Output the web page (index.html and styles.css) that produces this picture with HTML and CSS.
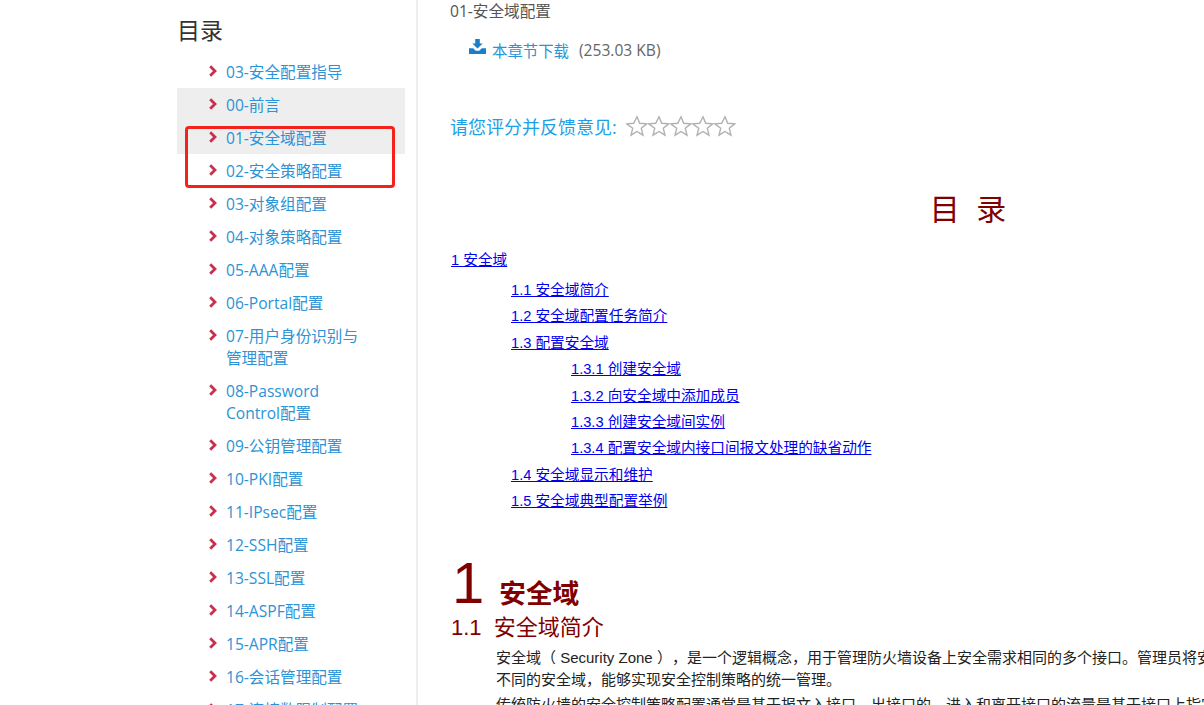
FILE: index.html
```html
<!DOCTYPE html>
<html lang="zh">
<head>
<meta charset="utf-8">
<title>01-安全域配置</title>
<link rel="stylesheet" href="styles.css">
</head>
<body>
<div class="page">
  <aside class="sidebar">
    <h2 class="side-title">目录</h2>
    <ul class="tree">
      <li class="item"><svg class="chev" viewBox="0 0 8 12"><path d="M1.2 1.2 6 6l-4.8 4.8"/></svg><a>03-安全配置指导</a></li>
      <li class="item on"><svg class="chev" viewBox="0 0 8 12"><path d="M1.2 1.2 6 6l-4.8 4.8"/></svg><a>00-前言</a></li>
      <li class="item on"><svg class="chev" viewBox="0 0 8 12"><path d="M1.2 1.2 6 6l-4.8 4.8"/></svg><a>01-安全域配置</a></li>
      <li class="item"><svg class="chev" viewBox="0 0 8 12"><path d="M1.2 1.2 6 6l-4.8 4.8"/></svg><a>02-安全策略配置</a></li>
      <li class="item"><svg class="chev" viewBox="0 0 8 12"><path d="M1.2 1.2 6 6l-4.8 4.8"/></svg><a>03-对象组配置</a></li>
      <li class="item"><svg class="chev" viewBox="0 0 8 12"><path d="M1.2 1.2 6 6l-4.8 4.8"/></svg><a>04-对象策略配置</a></li>
      <li class="item"><svg class="chev" viewBox="0 0 8 12"><path d="M1.2 1.2 6 6l-4.8 4.8"/></svg><a>05-AAA配置</a></li>
      <li class="item"><svg class="chev" viewBox="0 0 8 12"><path d="M1.2 1.2 6 6l-4.8 4.8"/></svg><a>06-Portal配置</a></li>
      <li class="item"><svg class="chev" viewBox="0 0 8 12"><path d="M1.2 1.2 6 6l-4.8 4.8"/></svg><a>07-用户身份识别与<br>管理配置</a></li>
      <li class="item"><svg class="chev" viewBox="0 0 8 12"><path d="M1.2 1.2 6 6l-4.8 4.8"/></svg><a>08-Password<br>Control配置</a></li>
      <li class="item"><svg class="chev" viewBox="0 0 8 12"><path d="M1.2 1.2 6 6l-4.8 4.8"/></svg><a>09-公钥管理配置</a></li>
      <li class="item"><svg class="chev" viewBox="0 0 8 12"><path d="M1.2 1.2 6 6l-4.8 4.8"/></svg><a>10-PKI配置</a></li>
      <li class="item"><svg class="chev" viewBox="0 0 8 12"><path d="M1.2 1.2 6 6l-4.8 4.8"/></svg><a>11-IPsec配置</a></li>
      <li class="item"><svg class="chev" viewBox="0 0 8 12"><path d="M1.2 1.2 6 6l-4.8 4.8"/></svg><a>12-SSH配置</a></li>
      <li class="item"><svg class="chev" viewBox="0 0 8 12"><path d="M1.2 1.2 6 6l-4.8 4.8"/></svg><a>13-SSL配置</a></li>
      <li class="item"><svg class="chev" viewBox="0 0 8 12"><path d="M1.2 1.2 6 6l-4.8 4.8"/></svg><a>14-ASPF配置</a></li>
      <li class="item"><svg class="chev" viewBox="0 0 8 12"><path d="M1.2 1.2 6 6l-4.8 4.8"/></svg><a>15-APR配置</a></li>
      <li class="item"><svg class="chev" viewBox="0 0 8 12"><path d="M1.2 1.2 6 6l-4.8 4.8"/></svg><a>16-会话管理配置</a></li>
      <li class="item"><svg class="chev" viewBox="0 0 8 12"><path d="M1.2 1.2 6 6l-4.8 4.8"/></svg><a>17-连接数限制配置</a></li>
    </ul>
    <div class="callout"></div>
  </aside>
  <main class="main">
    <div class="crumb">01-安全域配置</div>
    <div class="download">
      <svg class="dl-icon" viewBox="0 0 17 15"><path d="M6.2 0h4.6v4.6h2.9L8.5 9.6 3.3 4.6h2.9z"/><path d="M0 9.2h4.2l2.6 2.5h3.4l2.6-2.5H17V15H0z"/></svg>
      <a class="dl-link">本章节下载</a><span class="dl-size">(253.03 KB)</span>
    </div>
    <div class="rate">
      <span class="rate-label">请您评分并反馈意见:</span>
      <span class="stars">
        <svg class="star" viewBox="0 0 22 22"><path d="M11 1.8l2.7 6.5 7 .5-5.4 4.5 1.7 6.9-6-3.7-6 3.7 1.7-6.9L.7 8.8l7-.5z"/></svg>
        <svg class="star" viewBox="0 0 22 22"><path d="M11 1.8l2.7 6.5 7 .5-5.4 4.5 1.7 6.9-6-3.7-6 3.7 1.7-6.9L.7 8.8l7-.5z"/></svg>
        <svg class="star" viewBox="0 0 22 22"><path d="M11 1.8l2.7 6.5 7 .5-5.4 4.5 1.7 6.9-6-3.7-6 3.7 1.7-6.9L.7 8.8l7-.5z"/></svg>
        <svg class="star" viewBox="0 0 22 22"><path d="M11 1.8l2.7 6.5 7 .5-5.4 4.5 1.7 6.9-6-3.7-6 3.7 1.7-6.9L.7 8.8l7-.5z"/></svg>
        <svg class="star" viewBox="0 0 22 22"><path d="M11 1.8l2.7 6.5 7 .5-5.4 4.5 1.7 6.9-6-3.7-6 3.7 1.7-6.9L.7 8.8l7-.5z"/></svg>
      </span>
    </div>
    <article class="doc">
      <h1 class="doc-toc-title">目&nbsp;&nbsp;录</h1>
      <p class="toc l1"><a href="#">1 安全域</a></p>
      <p class="toc l2"><a href="#">1.1 安全域简介</a></p>
      <p class="toc l2"><a href="#">1.2 安全域配置任务简介</a></p>
      <p class="toc l2"><a href="#">1.3 配置安全域</a></p>
      <p class="toc l3"><a href="#">1.3.1 创建安全域</a></p>
      <p class="toc l3"><a href="#">1.3.2 向安全域中添加成员</a></p>
      <p class="toc l3"><a href="#">1.3.3 创建安全域间实例</a></p>
      <p class="toc l3"><a href="#">1.3.4 配置安全域内接口间报文处理的缺省动作</a></p>
      <p class="toc l2"><a href="#">1.4 安全域显示和维护</a></p>
      <p class="toc l2"><a href="#">1.5 安全域典型配置举例</a></p>
      <h2 class="h1"><span class="h1-num">1</span><span class="h1-text">安全域</span></h2>
      <h3 class="h2">1.1&nbsp; 安全域简介</h3>
      <p class="body">安全域（ Security Zone ），是一个逻辑概念，用于管理防火墙设备上安全需求相同的多个接口。管理员将安全需求相同的接口进行分组，并加入</p>
      <p class="body">不同的安全域，能够实现安全控制策略的统一管理。</p>
      <p class="body next">传统防火墙的安全控制策略配置通常是基于报文入接口、出接口的，进入和离开接口的流量是基于接口上指定的方向来进行匹配</p>
    </article>
  </main>
</div>
</body>
</html>
```
FILE: styles.css
```css
* { box-sizing: border-box; }
html, body { margin: 0; height: 705px; overflow: hidden; background: #fff; }
body { font-family: "Open Sans", "Noto Sans CJK SC", sans-serif; color: #333; }
.page { display: flex; height: 705px; overflow: hidden; }

.sidebar {
  position: relative;
  flex: 0 0 418px;
  height: 705px;
  overflow: hidden;
  padding: 15px 11px 0 177px;
  border-right: 2px solid #eee;
}
.side-title { margin: 0 0 10px; font-size: 23px; font-weight: 400; line-height: 30px; color: #333; }
.tree { list-style: none; margin: 0; padding: 0; }
.item {
  position: relative;
  padding: 5.5px 0 5.5px 49px;
  font-size: 15.6px;
  line-height: 22px;
  color: #2b93d6;
}
.item.on { background: #eee; }
.chev {
  position: absolute;
  left: 32px;
  top: 10px;
  width: 8px;
  height: 12px;
  fill: none;
  stroke: #c9304f;
  stroke-width: 2.8;
}
.callout {
  position: absolute;
  left: 185px;
  top: 126px;
  width: 210px;
  height: 62px;
  border: 3px solid #f5221b;
  border-radius: 4px;
}

.main { flex: 1 1 auto; min-width: 0; padding: 0 0 0 32px; overflow: hidden; }
.crumb { font-size: 15.6px; line-height: 22px; color: #555; }
.download { display: flex; align-items: center; margin: 17px 0 0 19px; height: 22px; font-size: 15.6px; }
.dl-icon { width: 17px; height: 15px; fill: #1a7fc9; margin: -8px 6px 0 0; }
.dl-link { color: #2b93d6; font-size: 15.4px; }
.dl-size { margin-left: 10px; color: #666; }
.rate { display: flex; align-items: center; margin-top: 53px; height: 24px; }
.rate-label { font-size: 18px; color: #1ea0e6; }
.stars { display: flex; margin-left: 9px; }
.star { width: 22px; height: 22px; fill: #fff; stroke: #b0b0b0; stroke-width: 1.4; }

.doc { width: 1036px; font-family: "Liberation Sans", "Noto Sans CJK SC", sans-serif; text-spacing-trim: space-all; }
.doc-toc-title { margin: 51px 0 16px; text-align: center; font-size: 30px; font-weight: 400; line-height: 42px; color: #800000; }
.toc { margin: 0 0 0 1px; font-size: 14.67px; line-height: 26.4px; white-space: nowrap; }
.toc a { color: #0000ee; }
.l1 { margin-bottom: 3.6px; }
.l2 { padding-left: 60px; }
.l3 { padding-left: 120px; }
.h1 { display: flex; align-items: baseline; margin: 38px 0 0 2px; color: #800000; line-height: 60px; }
.h1-num { font-size: 58px; font-weight: 400; }
.h1-text { margin-left: 15px; font-size: 26.67px; font-weight: 700; }
.h2 { margin: -11px 0 4px 1px; font-size: 22px; font-weight: 400; line-height: 30px; color: #800000; }
.body { margin: 0 0 0 46px; font-size: 15px; line-height: 22px; color: #222; white-space: nowrap; }
.next { margin-top: 3px; }
```
